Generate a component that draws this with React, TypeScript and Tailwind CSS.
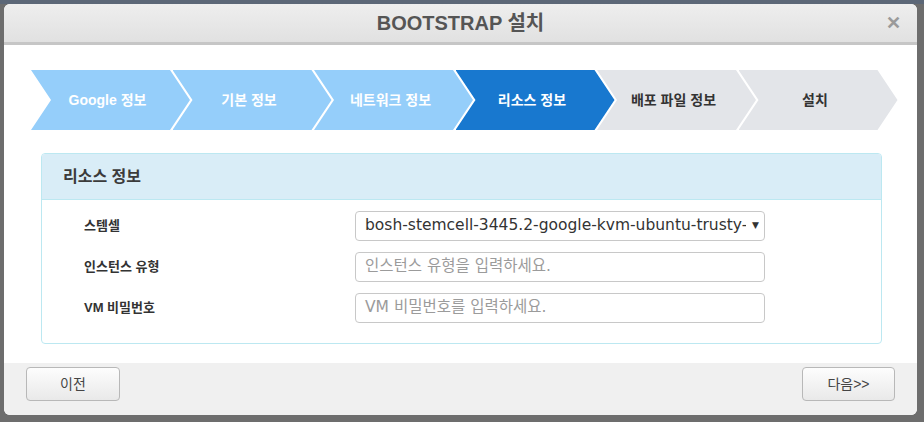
import React from 'react';

const steps = [
  { label: 'Google 정보', state: 'done' },
  { label: '기본 정보', state: 'done' },
  { label: '네트워크 정보', state: 'done' },
  { label: '리소스 정보', state: 'active' },
  { label: '배포 파일 정보', state: 'todo' },
  { label: '설치', state: 'todo' },
];

const stepColor: Record<string, string> = {
  done: 'bg-[#95cefa] text-white',
  active: 'bg-[#1878cf] text-white',
  todo: 'bg-[#e3e5e9] text-[#333]',
};

const kr = { fontFamily: '"Liberation Sans", "Noto Sans CJK KR", sans-serif' };
const field = { fontFamily: '"DejaVu Sans", "Noto Sans CJK KR", sans-serif' };

const App: React.FC = () => {
  return (
    <div className="w-[924px] h-[422px] overflow-hidden bg-[#6d6d6d] border-t-[4px] border-[#5c6777] pl-[4px]" style={kr}>
      <div className="w-[913px] h-[411px] rounded-[6px] bg-white overflow-hidden flex flex-col">
        {/* header */}
        <div className="relative h-[41px] shrink-0 flex items-center justify-center bg-gradient-to-b from-[#eeeeee] to-[#e1e1e1] border-b-[3px] border-[#c6c6c6]">
          <span className="text-[20px] font-bold text-[#555]">BOOTSTRAP 설치</span>
          <span className="absolute right-[16px] top-[10px] text-[18px] font-bold text-[#9a9a9a] leading-none">✕</span>
        </div>

        {/* body */}
        <div className="flex-1 bg-white pt-[25px] pl-[27px]">
          <div className="flex h-[60px]">
            {steps.map((s, i) => (
              <div
                key={s.label}
                className={`w-[159px] h-[60px] shrink-0 flex items-center justify-center pr-[6px] text-[14px] font-bold [clip-path:polygon(0_0,139px_0,159px_50%,139px_100%,0_100%,20px_50%)] ${stepColor[s.state]} ${i > 0 ? '-ml-[17.5px]' : ''}`}
              >
                {s.label}
              </div>
            ))}
          </div>

          <div className="mt-[23px] ml-[10px] w-[841px] h-[191px] border border-[#bce8f1] rounded-[4px] overflow-hidden">
            <div className="h-[46px] bg-[#d9edf7] border-b border-[#bce8f1] flex items-center pl-[21px] text-[16px] font-bold text-[#3b3b3b]">
              리소스 정보
            </div>
            <div className="pt-[11px] flex flex-col gap-[11px]">
              <div className="flex items-center h-[30px]">
                <div className="w-[313px] pl-[42px] text-[13px] font-bold text-[#333]">스템셀</div>
                <div className="w-[410px] h-[30px] border border-[#c8c8c8] rounded-[4px] flex items-center pl-[9px] pr-[5px] text-[15.5px] text-[#333]" style={field}>
                  <span className="flex-1 min-w-0 overflow-hidden whitespace-nowrap">bosh-stemcell-3445.2-google-kvm-ubuntu-trusty-go_agent</span>
                  <span className="text-[9px] text-[#333] ml-[6px]">▼</span>
                </div>
              </div>
              <div className="flex items-center h-[30px]">
                <div className="w-[313px] pl-[42px] text-[13px] font-bold text-[#333]">인스턴스 유형</div>
                <div className="w-[410px] h-[30px] border border-[#c8c8c8] rounded-[4px] flex items-center pl-[9px] text-[15.5px] text-[#9b9b9b]" style={field}>
                  인스턴스 유형을 입력하세요.
                </div>
              </div>
              <div className="flex items-center h-[30px]">
                <div className="w-[313px] pl-[42px] text-[13px] font-bold text-[#333]">VM 비밀번호</div>
                <div className="w-[410px] h-[30px] border border-[#c8c8c8] rounded-[4px] flex items-center pl-[9px] text-[15.5px] text-[#9b9b9b]" style={field}>
                  VM 비밀번호를 입력하세요.
                </div>
              </div>
            </div>
          </div>
        </div>

        {/* footer */}
        <div className="h-[52px] shrink-0 bg-[#f0f0f0] flex justify-between items-start pt-[4px] px-[22px]">
          <button className="w-[94px] h-[34px] rounded-[4px] border border-[#b8b8b8] bg-gradient-to-b from-[#fdfdfd] to-[#e9e9e9] text-[14px] text-[#444]">
            이전
          </button>
          <button className="w-[93px] h-[34px] rounded-[4px] border border-[#b8b8b8] bg-gradient-to-b from-[#fdfdfd] to-[#e9e9e9] text-[14px] text-[#444]">
            다음&gt;&gt;
          </button>
        </div>
      </div>
    </div>
  );
};

export default App;
